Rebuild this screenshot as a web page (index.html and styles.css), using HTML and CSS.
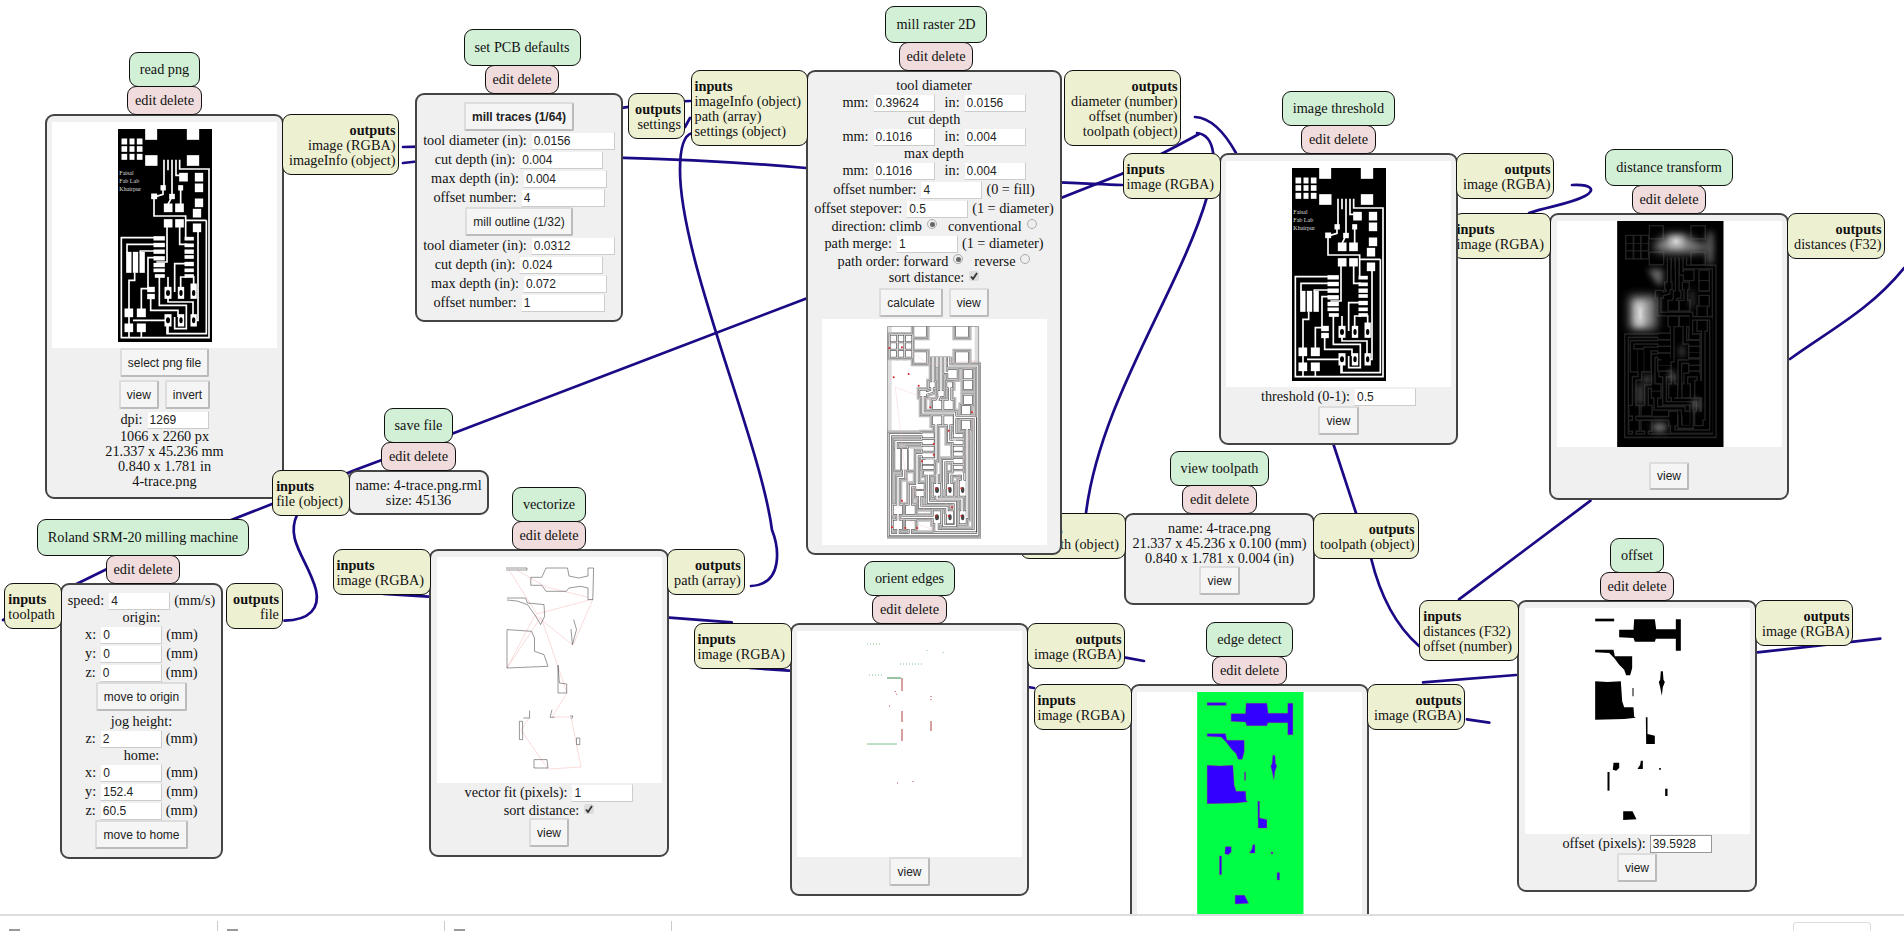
FILE: index.html
```html
<!DOCTYPE html>
<html lang="en">
<head>
    <meta charset="UTF-8">
    <title>mods</title>
    <link rel="stylesheet" href="styles.css">
</head>
<body>
    <svg class="defs" width="0" height="0">
        <defs>
            <g id="pcb-lines">
                <rect x="289" y="28" width="31" height="28"/><rect x="414" y="28" width="32" height="28"/>
                <rect x="218" y="57" width="12" height="13"/><rect x="242" y="57" width="10" height="13"/><rect x="264" y="57" width="12" height="13"/>
                <rect x="218" y="80" width="12" height="12"/><rect x="242" y="80" width="10" height="12"/><rect x="264" y="80" width="12" height="12"/>
                <rect x="218" y="103" width="12" height="13"/><rect x="242" y="103" width="10" height="13"/><rect x="264" y="103" width="12" height="13"/>
                <rect x="289" y="107" width="32" height="27"/><rect x="414" y="107" width="32" height="27"/>
                <rect x="391" y="160" width="21" height="21"/><rect x="438" y="160" width="20" height="21"/><rect x="438" y="192" width="20" height="21"/>
                <rect x="438" y="237" width="20" height="21"/><rect x="432" y="268" width="20" height="21"/>
                <rect x="345" y="252" width="21" height="21"/><rect x="379" y="252" width="21" height="21"/>
                <rect x="345" y="299" width="21" height="20"/><rect x="379" y="299" width="21" height="20"/><rect x="432" y="312" width="20" height="21"/>
                <rect x="307" y="222" width="13" height="12"/><rect x="335" y="197" width="11" height="11"/><rect x="361" y="223" width="12" height="11"/><rect x="388" y="197" width="10" height="11"/>
                <rect x="314" y="350" width="29" height="8"/><rect x="314" y="370" width="29" height="8"/><rect x="314" y="390" width="29" height="8"/><rect x="314" y="410" width="29" height="8"/><rect x="314" y="430" width="29" height="8"/><rect x="314" y="447" width="29" height="6"/><rect x="318" y="464" width="25" height="6"/>
                <rect x="407" y="352" width="23" height="6"/><rect x="407" y="372" width="23" height="6"/><rect x="407" y="390" width="23" height="8"/><rect x="407" y="407" width="23" height="6"/><rect x="407" y="427" width="23" height="8"/><rect x="407" y="447" width="23" height="6"/><rect x="407" y="464" width="23" height="6"/>
                <rect x="232" y="397" width="11" height="58"/><rect x="252" y="397" width="11" height="58"/><rect x="272" y="397" width="11" height="58"/>
                <rect x="295" y="502" width="18" height="11"/><rect x="295" y="523" width="18" height="11"/>
                <rect x="227" y="567" width="21" height="21"/><rect x="264" y="567" width="22" height="21"/><rect x="227" y="612" width="21" height="21"/><rect x="264" y="612" width="22" height="21"/>
                <rect x="347" y="502" width="16" height="31"/><rect x="387" y="502" width="14" height="31"/><rect x="425" y="492" width="14" height="41"/>
                <rect x="347" y="584" width="16" height="32"/><rect x="387" y="584" width="14" height="32"/><rect x="425" y="584" width="14" height="32"/>
                <path fill="none" d="M343 118V200M355 118V150M367 118V228M379 118V165H400M390 118V146H478V652H215V352H320M393 200V262M340 202V222L320 228M355 252L367 228M313 228V287H408V350M470 300V640H352V618M408 300H470M445 320V600H432M232 397V372H320M272 397V392H320M255 457V480H238V567M320 412H295V505M300 505H275V567M303 534V570H385V590M352 319V425H320M390 319V372H412M329 470V555H410V625H375V590M375 515V430H412M355 502V470M393 502V470H412M432 492V467M355 533V545H430V590M250 600H347M238 590V612M238 633V652M275 633V652M355 616V640"/>
            </g>
            <g id="pcb-holes">
                <ellipse cx="355" cy="518" rx="6" ry="9"/><ellipse cx="394" cy="518" rx="5" ry="9"/><ellipse cx="432" cy="518" rx="5" ry="9"/>
                <ellipse cx="355" cy="600" rx="6" ry="9"/><ellipse cx="394" cy="600" rx="5" ry="9"/><ellipse cx="432" cy="600" rx="5" ry="9"/>
            </g>
            <g id="pcb-text" class="pcb-text">
                <text x="209" y="163">Faisal</text>
                <text x="209" y="188">Fab Lab</text>
                <text x="209" y="213">Khairpur</text>
            </g>
            <g id="voids">
                <polygon points="163,52 220,52 220,60 163,60"/>
                <polygon points="280,54 342,54 346,84 405,84 405,54 420,54 420,148 405,148 405,112 345,112 342,121 282,121 278,110 235,108 235,85 278,85"/>
                <polygon points="163,145 218,145 222,165 274,165 274,200 268,222 256,222 250,205 235,190 220,170 205,155 163,153"/>
                <polygon points="163,240 200,242 240,240 244,300 250,318 278,318 280,346 285,349 250,353 163,355"/>
                <polygon points="275,260 278,260 278,285 275,285"/>
                <polygon points="360,210 366,210 368,235 372,242 366,258 363,283 358,258 354,242 358,235"/>
                <polygon points="315,348 320,348 320,398 342,403 342,428 316,428"/>
                <polygon points="218,484 235,484 235,500 226,508 216,505"/>
                <polygon points="300,478 306,478 306,503 290,503 298,490"/>
                <polygon points="355,500 360,500 360,505 355,505"/>
                <polygon points="200,512 206,512 206,568 200,568"/>
                <polygon points="373,562 380,562 380,584 373,584"/>
                <polygon points="247,630 275,630 287,654 247,656"/>
            </g>
            <filter id="soft" x="-100%" y="-100%" width="300%" height="300%"><feGaussianBlur stdDeviation="9"/></filter>
            <filter id="softer" x="-100%" y="-100%" width="300%" height="300%"><feGaussianBlur stdDeviation="14"/></filter>
            <filter id="faint"><feGaussianBlur stdDeviation="1.5"/></filter>
        </defs>
    </svg>

    <div class="canvas">
        <svg class="wires" viewBox="0 0 1904 914">
            <path d="M403 163C520 150 720 160 806 168S1000 180 1122 185"/>
            <path d="M403 147C500 147 600 101 690 101"/>
            <path d="M751 586C785 584 778 545 772 530C760 440 680 260 680 170C680 145 685 135 692 133"/>
            <path d="M685 127L690 118"/>
            <path d="M1199 134Q1170 150 1121.6 174L805 299L640 362L454 433L355 470L272 504L107 569L3 620"/>
            <path d="M1197 133C1216 135 1218 165 1207 197C1180 290 1100 400 1086 513"/>
            <path d="M1195 117C1212 118 1226 135 1236 153"/>
            <path d="M1572 185C1592 184 1596 190 1585 196C1570 204 1550 206 1529 213"/>
            <path d="M284.500 620.700C310 620 320 608 316 590C308 560 285 540 297 515"/>
            <path d="M383.700 594L428.600 596.700"/>
            <path d="M669.400 617.700L731.800 622.300"/>
            <path d="M750 668L789 670.700"/>
            <path d="M1125.700 657.700L1144 661"/>
            <path d="M1027.800 687L1034 688"/>
            <path d="M1466.900 719.300L1489.300 722.700"/>
            <path d="M1423 682.300L1516 675"/>
            <path d="M1757.500 652.300L1880.300 638.700"/>
            <path d="M1333 443L1356 513L1371 558C1380 595 1395 625 1419 646"/>
            <path d="M1590.500 500.700L1459 599.300"/>
            <path d="M1790 359C1830 330 1870 310 1904 268"/>
        </svg>

        <div class="mod read-png">
            <div class="head"><div class="title">read png</div><div class="menu">edit delete</div></div>
            <div class="card">
                <div class="image">
                    <svg class="pcb" viewBox="205 26 282 639">
                        <rect x="205" y="26" width="282" height="639"/>
                        <use href="#pcb-lines" fill="#fff" stroke="#fff" stroke-width="5"/>
                        <use href="#pcb-holes"/>
                        <use href="#pcb-text" fill="#ddd"/>
                    </svg>
                </div>
                <button class="btn">select png file</button>
                <div class="btn-row tight"><button class="btn">view</button><button class="btn">invert</button></div>
                <div class="row"><span>dpi:</span><input class="field" value="1269"></div>
                <div class="line">1066 x 2260 px</div>
                <div class="line">21.337 x 45.236 mm</div>
                <div class="line">0.840 x 1.781 in</div>
                <div class="line">4-trace.png</div>
            </div>
            <div class="port outputs"><b>outputs</b><span>image (RGBA)</span><span>imageInfo (object)</span></div>
        </div>

        <div class="mod pcb-defaults">
            <div class="head"><div class="title">set PCB defaults</div><div class="menu">edit delete</div></div>
            <div class="card">
                <button class="btn strong">mill traces (1/64)</button>
                <div class="row"><span>tool diameter (in):</span><input class="field wide" value="0.0156"></div>
                <div class="row"><span>cut depth (in):</span><input class="field wide" value="0.004"></div>
                <div class="row"><span>max depth (in):</span><input class="field wide" value="0.004"></div>
                <div class="row"><span>offset number:</span><input class="field wide" value="4"></div>
                <button class="btn">mill outline (1/32)</button>
                <div class="row"><span>tool diameter (in):</span><input class="field wide" value="0.0312"></div>
                <div class="row"><span>cut depth (in):</span><input class="field wide" value="0.024"></div>
                <div class="row"><span>max depth (in):</span><input class="field wide" value="0.072"></div>
                <div class="row"><span>offset number:</span><input class="field wide" value="1"></div>
            </div>
            <div class="port outputs"><b>outputs</b><span>settings</span></div>
        </div>

        <div class="mod save-file">
            <div class="head"><div class="title">save file</div><div class="menu">edit delete</div></div>
            <div class="card">
                <div class="line">name: 4-trace.png.rml</div>
                <div class="line">size: 45136</div>
            </div>
            <div class="port inputs"><b>inputs</b><span>file (object)</span></div>
        </div>

        <div class="mod roland">
            <div class="head"><div class="title">Roland SRM-20 milling machine</div><div class="menu">edit delete</div></div>
            <div class="card">
                <div class="row"><span>speed:</span><input class="field" value="4"><span>(mm/s)</span></div>
                <div class="line">origin:</div>
                <div class="row"><span>x:</span><input class="field" value="0"><span>(mm)</span></div>
                <div class="row"><span>y:</span><input class="field" value="0"><span>(mm)</span></div>
                <div class="row"><span>z:</span><input class="field" value="0"><span>(mm)</span></div>
                <button class="btn">move to origin</button>
                <div class="line spaced">jog height:</div>
                <div class="row"><span>z:</span><input class="field" value="2"><span>(mm)</span></div>
                <div class="line">home:</div>
                <div class="row"><span>x:</span><input class="field" value="0"><span>(mm)</span></div>
                <div class="row"><span>y:</span><input class="field" value="152.4"><span>(mm)</span></div>
                <div class="row"><span>z:</span><input class="field" value="60.5"><span>(mm)</span></div>
                <button class="btn">move to home</button>
            </div>
            <div class="port inputs"><b>inputs</b><span>toolpath</span></div>
            <div class="port outputs"><b>outputs</b><span>file</span></div>
        </div>

        <div class="mod vectorize">
            <div class="head"><div class="title">vectorize</div><div class="menu">edit delete</div></div>
            <div class="card">
                <div class="image">
                    <svg class="full" viewBox="0 0 225 226">
                        <polyline class="rapid" points="72,13 100,57 156,42 136,88 98,58 70,111 104,60 130,136 115,160 134,160 144,210 111,212 84,173 92,161"/>
                        <polyline class="rapid" points="80,13 109,30 150,40"/>
                        <g class="cut">
                            <polyline points="69,11 90,11 90,13 69,13"/>
                            <polygon points="109,11 130.500,11 132,19 141.600,21 151,19 151,11 156.600,11 155.800,42.600 151,42.600 151,31 143.600,29.300 132,31 129.300,34.300 109,34.300 104.800,28.300 93.800,28.300 93.800,20.300 104.800,20.300"/>
                            <polyline points="70,41 88.500,41 90.500,46 107,47.600 107.700,59.300 103.600,67.600 98.700,59.300 90.500,47.600 80,44 70,43"/>
                            <polygon points="70,72.600 94.600,74.300 97.500,81 97.500,94.300 107,97.600 111,109.300 70,111"/>
                            <polyline points="136.700,62.600 139.500,72.600 135.400,87.600 134,72"/>
                            <polyline points="121,108.300 122.400,126 129.700,127 129.700,136 121,136 121,108"/>
                            <polyline points="86.400,161 92.600,161 92.600,153.600"/>
                            <polygon points="82.400,164.300 85.600,164.300 85.600,182.600 82.400,182.600"/>
                            <polyline points="115,152.700 113,160.300 117.500,160.300"/>
                            <polyline points="133,159 136,159 134.500,162"/>
                            <polyline points="139.500,181 142.800,181 142.800,187.600 139.500,187.600 139.500,181"/>
                            <polygon points="97,202.600 110,202.600 111,211 97,211"/>
                        </g>
                    </svg>
                </div>
                <div class="row"><span>vector fit (pixels):</span><input class="field" value="1"></div>
                <div class="check-row"><span>sort distance:</span><span class="check"><svg viewBox="0 0 10 10"><path d="M2 5.500L4 8L8 2"/></svg></span></div>
                <button class="btn">view</button>
            </div>
            <div class="port inputs"><b>inputs</b><span>image (RGBA)</span></div>
            <div class="port outputs"><b>outputs</b><span>path (array)</span></div>
        </div>

        <div class="mod view-toolpath">
            <div class="head"><div class="title">view toolpath</div><div class="menu">edit delete</div></div>
            <div class="card">
                <div class="line">name: 4-trace.png</div>
                <div class="line">21.337 x 45.236 x 0.100 (mm)</div>
                <div class="line">0.840 x 1.781 x 0.004 (in)</div>
                <button class="btn">view</button>
            </div>
            <div class="port inputs"><b>inputs</b><span>toolpath (object)</span></div>
            <div class="port outputs"><b>outputs</b><span>toolpath (object)</span></div>
        </div>

        <div class="mod mill-raster">
            <div class="head"><div class="title">mill raster 2D</div><div class="menu">edit delete</div></div>
            <div class="card">
                <div class="line">tool diameter</div>
                <div class="row"><span>mm:</span><input class="field" value="0.39624"><span class="pair">in:</span><input class="field" value="0.0156"></div>
                <div class="line">cut depth</div>
                <div class="row"><span>mm:</span><input class="field" value="0.1016"><span class="pair">in:</span><input class="field" value="0.004"></div>
                <div class="line">max depth</div>
                <div class="row"><span>mm:</span><input class="field" value="0.1016"><span class="pair">in:</span><input class="field" value="0.004"></div>
                <div class="row"><span>offset number:</span><input class="field" value="4"><span>(0 = fill)</span></div>
                <div class="row"><span>offset stepover:</span><input class="field" value="0.5"><span>(1 = diameter)</span></div>
                <div class="choice-row"><span>direction: climb</span><span class="radio on"></span><span class="pair">conventional</span><span class="radio"></span></div>
                <div class="row"><span>path merge:</span><input class="field" value="1"><span>(1 = diameter)</span></div>
                <div class="choice-row"><span>path order: forward</span><span class="radio on"></span><span class="pair">reverse</span><span class="radio"></span></div>
                <div class="check-row"><span>sort distance:</span><span class="check"><svg viewBox="0 0 10 10"><path d="M2 5.500L4 8L8 2"/></svg></span></div>
                <div class="btn-row"><button class="btn">calculate</button><button class="btn">view</button></div>
                <div class="image raster-image">
                    <svg class="pcb" viewBox="205 26 282 639">
                        <rect class="margin" x="205" y="26" width="14" height="639"/>
                        <rect class="margin" x="468" y="26" width="14" height="639"/>
                        <use href="#pcb-lines" fill="#bdbdbd" stroke="#bdbdbd" stroke-width="26"/>
                        <use href="#pcb-lines" fill="#777" stroke="#777" stroke-width="16"/>
                        <use href="#pcb-lines" fill="#ddd" stroke="#ddd" stroke-width="13"/>
                        <use href="#pcb-lines" fill="#333" stroke="#333" stroke-width="8"/>
                        <use href="#pcb-lines" fill="#fff" stroke="#fff" stroke-width="5"/>
                        <use href="#pcb-holes" fill="#444"/>
                        <rect class="frame" x="207" y="28" width="272" height="630"/>
                        <polyline class="rapid" points="215,60 330,140 470,130 340,250 230,210 260,470 350,640 215,590 300,510 400,570 470,280"/>
                        <g class="dots">
                            <circle cx="212" cy="92" r="3"/><circle cx="250" cy="90" r="3"/><circle cx="300" cy="205" r="3"/><circle cx="335" cy="270" r="3"/><circle cx="345" cy="380" r="3"/><circle cx="345" cy="412" r="3"/><circle cx="310" cy="432" r="3"/><circle cx="390" cy="340" r="3"/><circle cx="352" cy="513" r="3"/><circle cx="390" cy="513" r="3"/><circle cx="428" cy="513" r="3"/><circle cx="352" cy="595" r="3"/><circle cx="390" cy="595" r="3"/><circle cx="428" cy="595" r="3"/><circle cx="220" cy="630" r="3"/><circle cx="260" cy="632" r="3"/><circle cx="295" cy="632" r="3"/><circle cx="250" cy="550" r="3"/><circle cx="225" cy="180" r="3"/><circle cx="270" cy="170" r="3"/><circle cx="460" cy="285" r="3"/><circle cx="400" cy="570" r="3"/>
                        </g>
                    </svg>
                </div>
            </div>
            <div class="port inputs"><b>inputs</b><span>imageInfo (object)</span><span>path (array)</span><span>settings (object)</span></div>
            <div class="port outputs"><b>outputs</b><span>diameter (number)</span><span>offset (number)</span><span>toolpath (object)</span></div>
        </div>

        <div class="mod distance">
            <div class="head"><div class="title">distance transform</div><div class="menu">edit delete</div></div>
            <div class="card">
                <div class="image">
                    <svg class="full" viewBox="-46 20 672 678">
                        <rect x="133" y="20" width="319" height="678"/>
                        <g transform="translate(-54 12)" filter="url(#faint)">
                            <use href="#pcb-lines" fill="#242424" stroke="#242424" stroke-width="15"/>
                            <use href="#pcb-lines" fill="#000" stroke="#000" stroke-width="7"/>
                        </g>
                        <g fill="#8a8a8a" filter="url(#softer)">
                            <rect x="170" y="245" width="80" height="100"/>
                            <polygon points="245,88 285,62 340,62 375,88 410,88 410,108 340,116 285,116 245,108"/>
                        </g>
                        <g fill="#6a6a6a" filter="url(#soft)">
                            <polygon points="225,165 270,165 268,215 250,205"/>
                            <rect x="322" y="395" width="10" height="32"/><rect x="354" y="228" width="7" height="52"/>
                            <rect x="215" y="484" width="16" height="22"/><rect x="360" y="555" width="18" height="30"/>
                            <rect x="240" y="625" width="40" height="28"/><rect x="196" y="510" width="12" height="60"/>
                            <rect x="404" y="54" width="16" height="94"/><rect x="290" y="470" width="14" height="34"/>
                        </g>
                        <g fill="#ccc" filter="url(#soft)">
                            <rect x="185" y="262" width="32" height="74"/>
                            <rect x="290" y="66" width="40" height="32"/>
                        </g>
                        <rect class="peak" x="199" y="282" width="7" height="32"/>
                        <rect class="peak" x="305" y="78" width="10" height="8"/>
                    </svg>
                </div>
                <button class="btn gap-top">view</button>
            </div>
            <div class="port inputs"><b>inputs</b><span>image (RGBA)</span></div>
            <div class="port outputs"><b>outputs</b><span>distances (F32)</span></div>
        </div>

        <div class="mod threshold">
            <div class="head"><div class="title">image threshold</div><div class="menu">edit delete</div></div>
            <div class="card">
                <div class="image">
                    <svg class="pcb" viewBox="205 26 282 639">
                        <rect x="205" y="26" width="282" height="639"/>
                        <use href="#pcb-lines" fill="#fff" stroke="#fff" stroke-width="5"/>
                        <use href="#pcb-holes"/>
                        <use href="#pcb-text" fill="#ddd"/>
                    </svg>
                </div>
                <div class="row"><span>threshold (0-1):</span><input class="field" value="0.5"></div>
                <button class="btn">view</button>
            </div>
            <div class="port inputs"><b>inputs</b><span>image (RGBA)</span></div>
            <div class="port outputs"><b>outputs</b><span>image (RGBA)</span></div>
        </div>

        <div class="mod orient">
            <div class="head"><div class="title">orient edges</div><div class="menu">edit delete</div></div>
            <div class="card">
                <div class="image">
                    <svg class="full" viewBox="0 0 225 226">
                        <g class="edge-green">
                            <path d="M70 113H100"/>
                            <path class="dotted" d="M70 13H85M103 33H125M72 44H86M130 19V21M146 21V23"/>
                            <path class="dark" d="M90 47H104"/>
                        </g>
                        <g class="edge-red">
                            <path d="M105 47V60M105 80V91M105 98V110M134 90V100"/>
                            <path class="dotted" d="M134 65V70M98 60L100 64M92 75H94M100 152H102M116 150V152"/>
                        </g>
                    </svg>
                </div>
                <button class="btn">view</button>
            </div>
            <div class="port inputs"><b>inputs</b><span>image (RGBA)</span></div>
            <div class="port outputs"><b>outputs</b><span>image (RGBA)</span></div>
        </div>

        <div class="mod edge-detect">
            <div class="head"><div class="title">edge detect</div><div class="menu">edit delete</div></div>
            <div class="card">
                <div class="image">
                    <svg class="full" viewBox="-46 20 672 678">
                        <rect class="field-green" x="133" y="20" width="319" height="678"/>
                        <use class="blue-voids" href="#voids"/>
                    </svg>
                </div>
            </div>
            <div class="port inputs"><b>inputs</b><span>image (RGBA)</span></div>
            <div class="port outputs"><b>outputs</b><span>image (RGBA)</span></div>
        </div>

        <div class="mod offset">
            <div class="head"><div class="title">offset</div><div class="menu">edit delete</div></div>
            <div class="card">
                <div class="image">
                    <svg class="full" viewBox="-46 20 672 678"><use href="#voids"/></svg>
                </div>
                <div class="row"><span>offset (pixels):</span><input class="field boxed" value="39.5928"></div>
                <button class="btn">view</button>
            </div>
            <div class="port inputs"><b>inputs</b><span>distances (F32)</span><span>offset (number)</span></div>
            <div class="port outputs"><b>outputs</b><span>image (RGBA)</span></div>
        </div>
    </div>

    <div class="taskbar">
        <div class="task"><i></i></div>
        <div class="task"><i></i></div>
        <div class="task"><i></i></div>
        <div class="task-end"></div>
    </div>
</body>
</html>
```

FILE: styles.css
```css
html, body {
    height: 100%;
}
body {
    margin: 0;
    display: flex;
    flex-direction: column;
    overflow: hidden;
    background: #fff;
    color: #111;
    font-family: "Liberation Serif", "Times New Roman", serif;
    font-size: 14.25px;
    line-height: 15px;
}
.defs {
    position: absolute;
}
.pcb-text {
    font-size: 18px;
}
.canvas {
    position: relative;
    flex: 1;
    overflow: hidden;
}
.wires {
    position: absolute;
    inset: 0;
    width: 100%;
    height: 100%;
}
.wires path {
    fill: none;
    stroke: #1a0a85;
    stroke-width: 2.7;
    stroke-linecap: round;
}

/* modules */
.mod {
    position: absolute;
}
.head {
    position: absolute;
    left: 0;
    right: 0;
    bottom: 100%;
    display: flex;
    flex-direction: column;
    align-items: center;
    white-space: nowrap;
}
.title {
    padding: 9px 10px;
    background: #d1f0d6;
    border: 1px solid #111;
    border-radius: 9px;
}
.menu {
    padding: 6px 7px;
    margin-top: -1px;
    margin-bottom: -1px;
    background: #f0dcdc;
    border: 1px solid #111;
    border-radius: 9px;
}
.card {
    box-sizing: border-box;
    display: flex;
    flex-direction: column;
    align-items: center;
    padding: 6px 6px 8px;
    background: #f0f0f0;
    border: 2px solid #444;
    border-radius: 9px;
}
.port {
    position: absolute;
    top: 0;
    display: flex;
    flex-direction: column;
    padding: 8px 3px 6px;
    background: #eef0d2;
    border: 1px solid #111;
    border-radius: 9px;
    white-space: nowrap;
}
.inputs {
    right: 100%;
    margin-right: -2px;
    padding-right: 6px;
    align-items: flex-start;
}
.outputs {
    left: 100%;
    margin-left: -2px;
    padding-left: 6px;
    align-items: flex-end;
}

/* form bits */
.line {
    height: 15px;
    white-space: nowrap;
}
.line.spaced {
    margin-top: 3px;
}
.row {
    display: flex;
    justify-content: center;
    align-items: center;
    gap: 4px;
    height: 19px;
    white-space: nowrap;
}
.choice-row,
.check-row {
    display: flex;
    justify-content: center;
    align-items: center;
    gap: 5px;
    height: 16px;
    white-space: nowrap;
}
.pair {
    margin-left: 6px;
}
.field {
    box-sizing: border-box;
    width: 62px;
    height: 18px;
    padding: 0 2px;
    margin: 0;
    color: #222;
    background: #fff;
    border: 1px solid;
    border-color: #f0f0f0 #ccc #ccc #f0f0f0;
    outline: none;
    font: 12px "Liberation Sans", Arial, sans-serif;
}
.field.wide {
    width: 84px;
}
.field.boxed {
    border-color: #999;
}
.btn {
    box-sizing: border-box;
    height: 29px;
    padding: 0 6px;
    margin: 0;
    color: #222;
    background: #f5f5f5;
    border: 2px solid;
    border-color: #ddd #bbb #bbb #ddd;
    border-radius: 2px;
    font: 12px "Liberation Sans", Arial, sans-serif;
}
.btn.strong {
    font-weight: bold;
}
.gap-top {
    margin-top: 15px;
}
.btn-row {
    display: flex;
    justify-content: center;
    gap: 6px;
    margin-top: 3px;
}
.btn-row.tight {
    margin-bottom: 1px;
}
.radio {
    position: relative;
    top: -2px;
    box-sizing: border-box;
    width: 10px;
    height: 10px;
    background: #eee;
    border: 1px solid #aaa;
    border-radius: 50%;
}
.radio.on::after {
    content: "";
    position: absolute;
    inset: 1.5px;
    background: #666;
    border-radius: 50%;
}
.check {
    position: relative;
    top: -1px;
    width: 10px;
    height: 10px;
    background: #ddd;
    border-radius: 2px;
}
.check svg {
    display: block;
    fill: none;
    stroke: #333;
    stroke-width: 1.8;
}

/* images */
.image {
    display: flex;
    justify-content: center;
    align-items: center;
    width: 225px;
    height: 226px;
    background: #fff;
    flex: none;
}
.pcb {
    width: 94px;
    height: 213px;
}
.full {
    width: 100%;
    height: 100%;
}
.raster-image {
    margin-top: 2px;
}
.rapid {
    fill: none;
    stroke: #f4b8b8;
    stroke-width: 1;
}
.full .rapid {
    stroke-width: .5;
}
.cut polyline,
.cut polygon {
    fill: none;
    stroke: #333;
    stroke-width: .5;
}
.margin {
    fill: #ddd;
}
.frame {
    fill: none;
    stroke: #888;
    stroke-width: 2;
}
.dots {
    fill: #d22;
}
.peak {
    fill: #ddd;
    filter: blur(3px);
}
.edge-green path {
    fill: none;
    stroke: #7cc08a;
    stroke-width: 1;
}
.edge-green .dark {
    stroke: #2f8a4a;
}
.edge-red path {
    fill: none;
    stroke: #b04040;
    stroke-width: 1;
}
.dotted {
    stroke-dasharray: 1 2;
}
.field-green {
    fill: #00ff44;
}
.blue-voids {
    fill: #3300ff;
    stroke: #c0206a;
    stroke-width: 1;
}

/* node places on the canvas */
.read-png { left: 45px; top: 114px; width: 239px; }
.pcb-defaults { left: 415px; top: 93px; width: 208px; }
.save-file { left: 348px; top: 470px; width: 141px; }
.roland { left: 60px; top: 583px; width: 163px; }
.vectorize { left: 429px; top: 549px; width: 240px; }
.view-toolpath { left: 1124px; top: 513px; width: 191px; }
.mill-raster { left: 806px; top: 70px; width: 256px; }
.distance { left: 1549px; top: 213px; width: 240px; }
.threshold { left: 1219px; top: 153px; width: 239px; }
.orient { left: 790px; top: 623px; width: 239px; }
.edge-detect { left: 1130px; top: 684px; width: 239px; }
.offset { left: 1517px; top: 600px; width: 240px; }

.pcb-defaults .card { padding: 7px 6px 8px; }
.pcb-defaults .outputs { margin-left: 5px; }
.mill-raster .outputs { margin-left: 2px; }
.roland .outputs { margin-left: 3px; }
.save-file .card { height: 45px; }
.distance .card { height: 287px; }
.edge-detect .card { height: 300px; }

.pcb-defaults .head { left: 6px; }
.mill-raster .head { left: 4px; }
.roland .head { left: 3px; }
.pcb-defaults .title,
.mill-raster .title,
.roland .title,
.distance .title { padding-top: 10px; padding-bottom: 10px; }

/* strip at the bottom of the window */
.taskbar {
    flex: none;
    display: flex;
    height: 15px;
    padding-top: 0;
    background: #fff;
    border-top: 2px solid #ddd;
}
.task {
    position: relative;
    box-sizing: border-box;
    width: 227px;
    height: 10px;
    margin-top: 5px;
    border-right: 1px solid #ccc;
}
.task:first-child {
    width: 218px;
}
.task i {
    position: absolute;
    left: 9px;
    bottom: 0;
    width: 11px;
    height: 2px;
    background: #999;
}
.task-end {
    box-sizing: border-box;
    width: 78px;
    height: 9px;
    margin: 6px 33px 0 auto;
    border: 1px solid #ddd;
    border-bottom: 0;
    border-radius: 4px 4px 0 0;
}
```
